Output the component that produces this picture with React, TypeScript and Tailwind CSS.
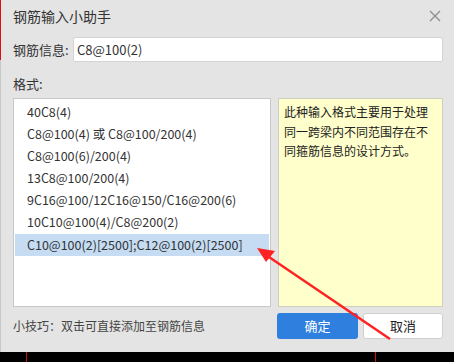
const formats = [
  "40C8(4)",
  "C8@100(4) 或 C8@100/200(4)",
  "C8@100(6)/200(4)",
  "13C8@100/200(4)",
  "9C16@100/12C16@150/C16@200(6)",
  "10C10@100(4)/C8@200(2)",
  "C10@100(2)[2500];C12@100(2)[2500]",
];

const font = { fontFamily: '"Microsoft YaHei", "Noto Sans CJK SC", sans-serif' };

export default function App() {
  const selected = 6;

  return (
    <div className="relative w-[454px] h-[362px] bg-black overflow-hidden" style={font}>
      {/* dialog */}
      <div className="flex flex-col h-[352px] bg-[#e4e4e4] border-l border-[#c9c9c9] text-[#333]">
        <div className="flex items-center justify-between h-[32px] pl-[12px] pr-[12px]">
          <span className="text-[14px] text-[#333]">钢筋输入小助手</span>
          <svg width="12" height="12" viewBox="0 0 12 12" className="mr-[1px]">
            <path d="M1 1L11 11M11 1L1 11" stroke="#8a8a8a" strokeWidth="1.2" />
          </svg>
        </div>

        <div className="flex items-center mt-[5px] pl-[12px] pr-[11px]">
          <span className="w-[60px] text-[13px]">钢筋信息:</span>
          <div className="flex-1 h-[25px] bg-white border border-[#d4d4d4] rounded-[2px] flex items-center px-[3px] text-[13px]">
            C8@100(2)
          </div>
        </div>

        <div className="pl-[12px] mt-[12px] text-[13px] leading-[20px]">格式:</div>

        <div className="flex gap-[7px] pl-[12px] pr-[11px] mt-[4px]">
          <div className="w-[258px] h-[209px] bg-white border border-[#c8c8c8] py-[1px] px-[1px]">
            <div className="flex flex-col pt-[1px]">
              {formats.map((f, i) => (
                <div
                  key={f}
                  className={`h-[22px] flex items-center pl-[12px] text-[12.5px] ${
                    i === selected ? "bg-[#c5dcf3] h-[20px] mt-[1px]" : ""
                  }`}
                >
                  {f}
                </div>
              ))}
            </div>
          </div>
          <div className="flex-1 h-[209px] bg-[#ffffcc] border border-[#cfcfc0] px-[5px] pt-[3px] text-[12px] leading-[19.5px] text-[#222]">
            此种输入格式主要用于处理同一跨梁内不同范围存在不同箍筋信息的设计方式。
          </div>
        </div>

        <div className="flex items-center pl-[12px] pr-[11px] mt-[6px]">
          <span className="flex-1 text-[12px] text-[#444]">小技巧：双击可直接添加至钢筋信息</span>
          <button className="w-[81px] h-[26px] rounded-[3px] bg-[#2f7fdf] text-white text-[13px]">确定</button>
          <button className="w-[80px] h-[26px] ml-[5px] rounded-[3px] bg-white border border-[#d0d0d0] text-[#222] text-[13px]">
            取消
          </button>
        </div>
      </div>

      {/* screen bits outside the dialog */}
      <div className="absolute left-0 top-0 w-[1px] h-[60px] bg-[#e01010]" />
      <div className="absolute left-[26px] top-[352px] w-[1px] h-[10px] bg-[#d01010]" />
      <div className="absolute left-[375px] top-[352px] w-[1px] h-[10px] bg-[#d01010]" />

      {/* annotation arrow */}
      <svg className="absolute inset-0 pointer-events-none" width="454" height="362">
        <line x1="390" y1="339" x2="266" y2="255" stroke="#f22" strokeWidth="2.5" />
        <polygon points="257,248 275,251 266,262" fill="#f22" />
      </svg>
    </div>
  );
}
